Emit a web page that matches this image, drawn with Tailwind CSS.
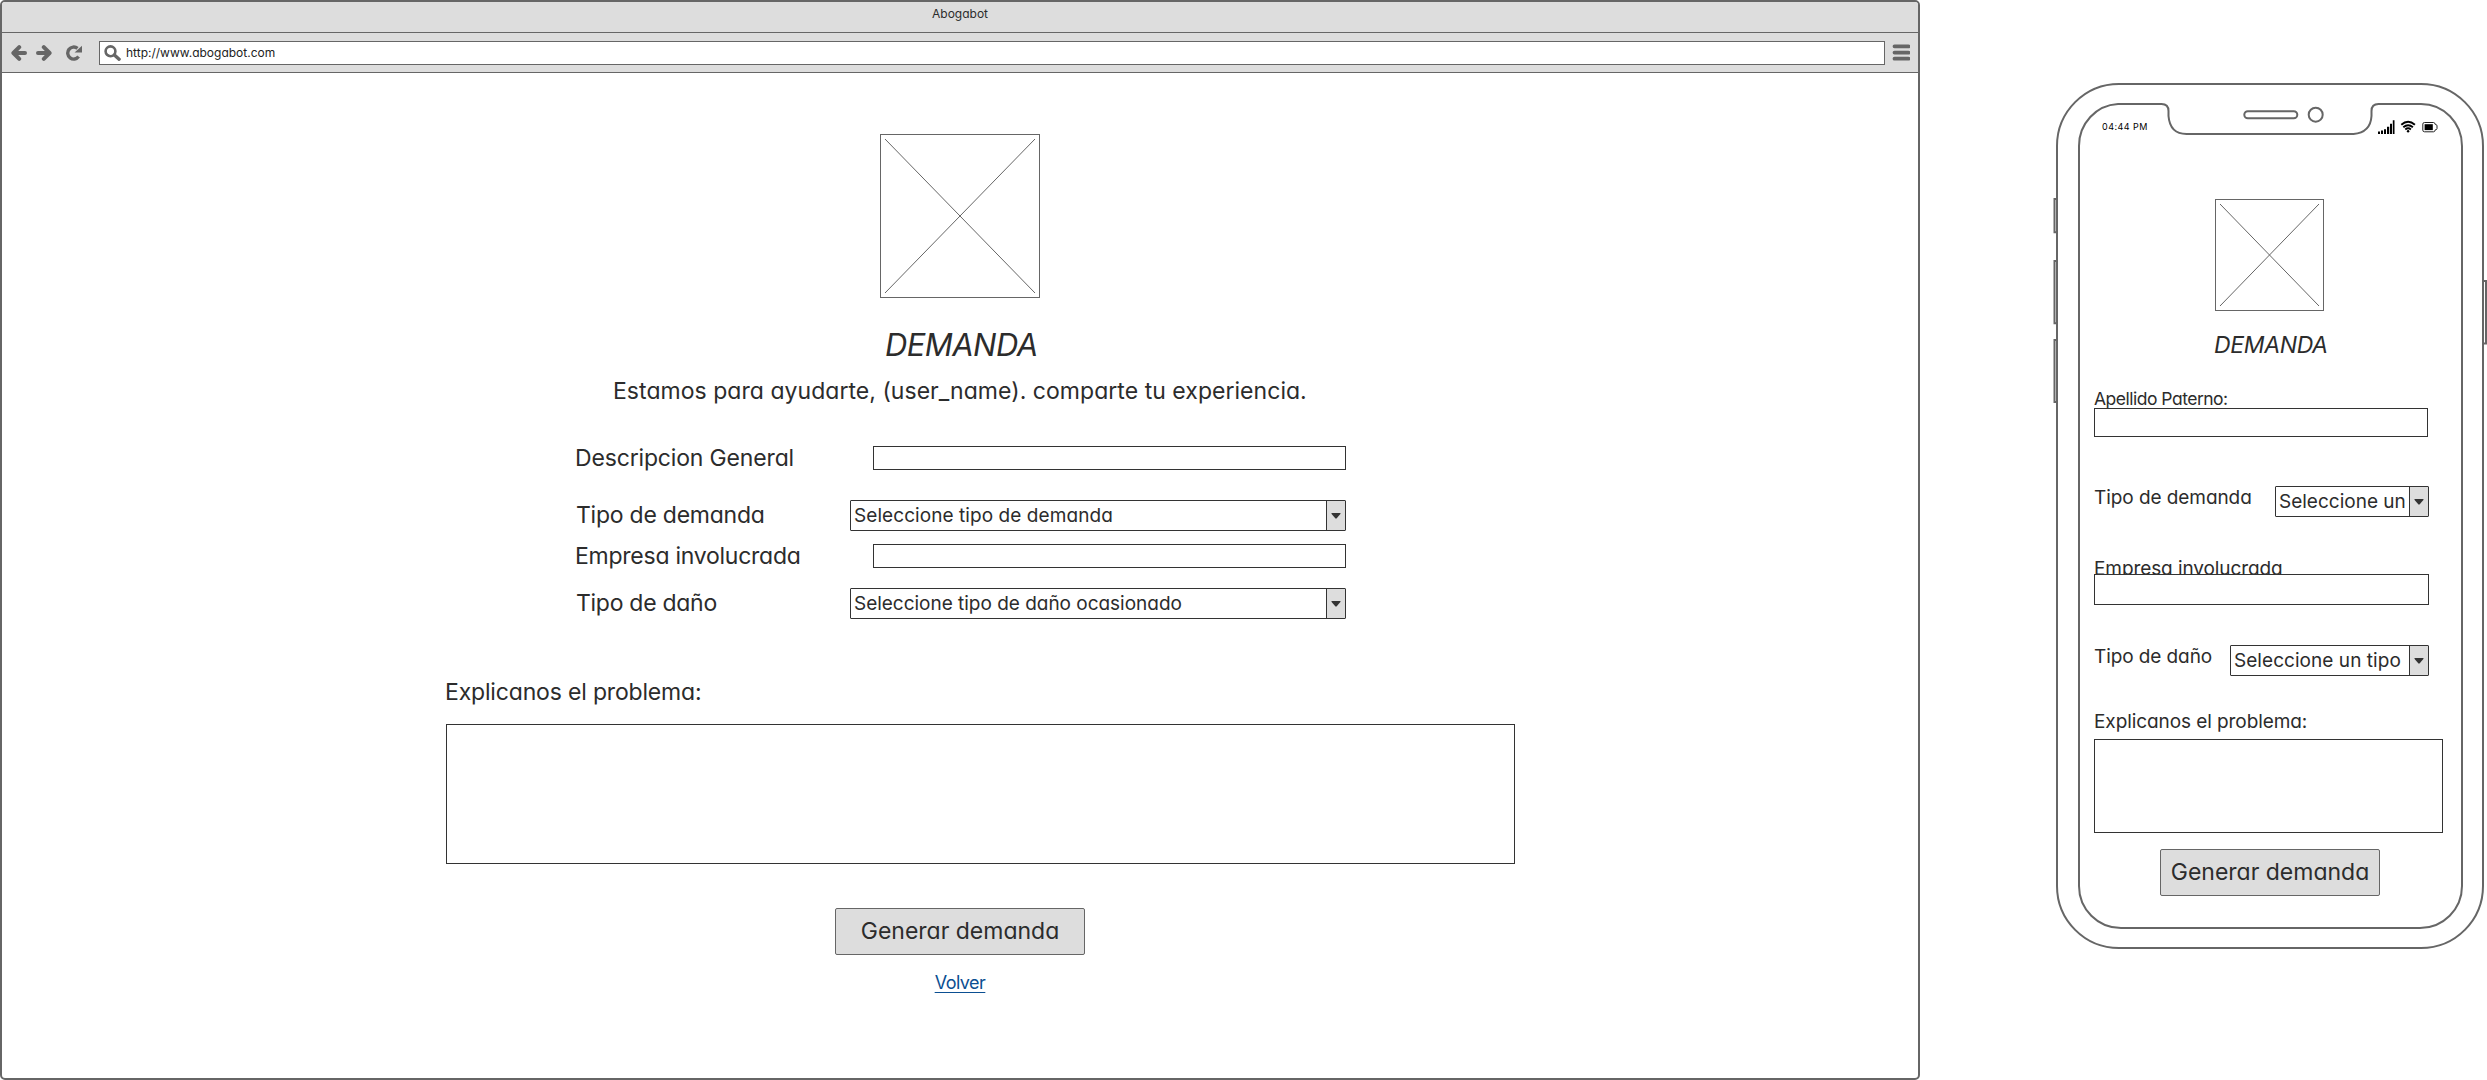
<!DOCTYPE html>
<html lang="es">
<head>
<meta charset="utf-8">
<title>Abogabot</title>
<script src="https://cdn.jsdelivr.net/npm/@tailwindcss/browser@4"></script>
</head>
<body class="flex h-[1080px] w-[2487px] overflow-hidden bg-white font-['Inter',sans-serif] text-[#2c2c2c] [font-feature-settings:'cv11']">

<!-- Desktop browser -->
<section class="flex h-[1080px] w-[1920px] shrink-0 flex-col overflow-hidden rounded-[5px] border-2 border-[#666666]">
  <header class="shrink-0 bg-[#dddddd]">
    <div class="h-[31px] border-b border-[#666666] text-center text-[12px] leading-6">Abogabot</div>
    <div class="flex h-10 items-center border-b border-[#666666] pl-[9px]">
      <svg class="h-4 w-[72px] shrink-0" viewBox="0 0 72 16" fill="none" stroke="#666666">
        <path d="M8.200 2.200 2.400 8l5.800 5.800M3 8h11" stroke-width="4" stroke-linecap="round" stroke-linejoin="round"/>
        <path d="M32.800 2.200 38.600 8l-5.800 5.800M38 8H27" stroke-width="4" stroke-linecap="round" stroke-linejoin="round"/>
        <path d="M67.600 11.600A6 6 0 1 1 66.500 3.400" stroke-width="3.400"/>
        <path d="M71 .8V7.400H63.600Z" fill="#666666" stroke="none"/>
      </svg>
      <div class="ml-4 flex h-6 w-[1786px] items-center border border-[#666666] bg-white pl-1">
        <svg class="h-4 w-[17px] shrink-0" viewBox="0 0 17 16" fill="none" stroke="#666666">
          <circle cx="6.500" cy="6.300" r="4.900" stroke-width="2.600"/>
          <path d="m10.400 10 4.700 4.200" stroke-width="3.400" stroke-linecap="round"/>
        </svg>
        <span class="ml-[5px] pt-px text-[12px] leading-[22px] text-[#222222]">http://www.abogabot.com</span>
      </div>
      <svg class="ml-[7px] h-[17px] w-[18px] shrink-0" viewBox="0 0 18 17" stroke="#666666" stroke-width="3.800" stroke-linecap="round"><path d="M2.500 2.300h14M2.500 8.600h14M2.500 14.700h14"/></svg>
    </div>
  </header>

  <main class="flex grow flex-col">
    <svg class="mt-[61px] ml-[878px] h-[164px] w-[160px] shrink-0" viewBox="0 0 160 164" fill="none" stroke="#666666">
      <rect x=".5" y=".5" width="159" height="163"/><path d="M5 5 155 159M155 5 5 159"/>
    </svg>
    <h1 class="mt-[26px] ml-[883px] h-10 text-[31px] leading-[42px] tracking-[-0.570px] italic">DEMANDA</h1>
    <p class="mt-3 ml-[611px] h-7 text-[23px] leading-[30px] whitespace-nowrap tracking-[0.040px]">Estamos para ayudarte, (user_name). comparte tu experiencia.</p>

    <form class="ml-[572px] flex w-[772px] flex-col">
      <div class="mt-[39px] flex h-7 items-start justify-between">
        <label class="pl-px text-[23px] leading-[30px] tracking-[-0.160px]">Descripcion General</label>
        <div class="mt-[3px] h-6 w-[473px] border border-[#333333]"></div>
      </div>
      <div class="mt-[29px] flex h-[31px] items-start justify-between">
        <label class="pl-[2px] text-[23px] leading-[30px] tracking-[-0.240px]">Tipo de demanda</label>
        <div class="flex h-[31px] w-[496px] rounded-[1px] border border-[#333333]">
          <span class="grow pl-[3px] text-[19px] leading-[29px] tracking-[0.070px]">Seleccione tipo de demanda</span>
          <span class="flex w-[19px] items-center justify-center border-l border-[#333333] bg-[#dddddd]"><svg class="h-[6px] w-[10px]" viewBox="0 0 10 6" fill="#333333"><path d="M1 0h8q1 0 .4.900L5.700 5.300q-.7.700-1.400 0L.6.900Q0 0 1 0Z"/></svg></span>
        </div>
      </div>
      <div class="mt-[10px] flex h-7 items-start justify-between">
        <label class="pl-px text-[23px] leading-[30px] tracking-[-0.250px]">Empresa involucrada</label>
        <div class="mt-[3px] h-6 w-[473px] border border-[#333333]"></div>
      </div>
      <div class="mt-[19px] flex h-[31px] items-start justify-between">
        <label class="pl-[2px] text-[23px] leading-[30px] tracking-[-0.280px]">Tipo de daño</label>
        <div class="flex h-[31px] w-[496px] rounded-[1px] border border-[#333333]">
          <span class="grow pl-[3px] text-[19px] leading-[29px] tracking-[-0.020px]">Seleccione tipo de daño ocasionado</span>
          <span class="flex w-[19px] items-center justify-center border-l border-[#333333] bg-[#dddddd]"><svg class="h-[6px] w-[10px]" viewBox="0 0 10 6" fill="#333333"><path d="M1 0h8q1 0 .4.900L5.700 5.300q-.7.700-1.400 0L.6.900Q0 0 1 0Z"/></svg></span>
        </div>
      </div>
    </form>

    <label class="mt-[58px] ml-[443px] h-7 text-[23px] leading-[30px] tracking-[-0.170px]">Explicanos el problema:</label>
    <div class="mt-[19px] ml-[444px] h-[140px] w-[1069px] shrink-0 border border-[#333333]"></div>
    <button class="mt-11 ml-[833px] h-[47px] w-[250px] shrink-0 rounded-[2px] border border-[#666666] bg-[#dddddd] text-[23px] leading-[45px]">Generar demanda</button>
    <a class="mt-4 self-center text-[18px] leading-6 tracking-[-0.520px] text-[#0b4f92] underline decoration-1 underline-offset-[3px]">Volver</a>
  </main>
</section>

<!-- Phone -->
<section class="relative mt-[82px] ml-[133px] h-[868px] w-[434px] shrink-0">
  <svg class="absolute inset-0 h-[868px] w-[434px]" viewBox="2053 82 434 868" fill="none" stroke="#666666" stroke-width="2">
    <rect x="2057" y="84" width="426" height="864" rx="62"/>
    <path d="M2118 104h43.500q7 0 7 7v5q1.500 18 18 18h167q17-1.500 18-18v-5q0-7 7-7h42.500a41 42 0 0 1 41 42v740a42 42 0 0 1-42 42h-299a42 42 0 0 1-42-42v-740a41 42 0 0 1 39-42Z"/>
    <rect x="2244.300" y="111.300" width="53" height="7" rx="3.500"/>
    <circle cx="2315.700" cy="114.700" r="7"/>
    <path d="M2056.500 199h-2v33.300h2M2056.500 261h-2v62.300h2M2056.500 340h-2v62h2M2483.500 281h2.500v62.500h-2.500"/>
  </svg>

  <div class="relative flex flex-col pt-[38px] pl-10">
    <div class="flex h-[14px] items-start pl-[9px] text-black">
      <span class="w-[276px] text-[9px] leading-[13px] tracking-[0.480px]">04:44 PM</span>
      <svg class="h-[14px] w-[60px]" viewBox="2378 120 60 14" fill="none">
        <path d="M2378 131.500h2v2.500h-2zM2381 130.500h2v3.500h-2zM2384 129.200h2v4.800h-2zM2387 126.800h2.200v7.200h-2.200zM2390 123.800h2v10.200h-2zM2392.800 120.200h1.700v13.800h-1.700z" fill="#000"/>
        <path d="M2401.300 124.800q6.800-6.200 13.600 0M2403.300 127.300q4.800-4.200 9.600 0M2405.300 129.500q2.800-2.300 5.600 0" stroke="#000" stroke-width="1.900"/>
        <circle cx="2408.100" cy="131.300" r="1.200" fill="#000"/>
        <path d="M2424.500 122.500h9q1.500 0 1.800 2 1.700 0 1.700 1.300v2.800q0 1.200-1.700 1.200-.3 2-1.800 2h-9q-1.700 0-1.700-1.700v-6q0-1.600 1.700-1.600Z" stroke="#222"/>
        <path d="M2424.600 124.200h8.200v5.900h-8.200z" fill="#000"/>
      </svg>
    </div>

    <svg class="mt-[65px] ml-[122px] h-28 w-[109px]" viewBox="0 0 109 112" fill="none" stroke="#666666">
      <rect x=".5" y=".5" width="108" height="111"/><path d="M5 5 104 107M104 5 5 107"/>
    </svg>
    <h2 class="mt-[19px] ml-[121px] h-7 text-[23px] leading-[30px] tracking-[-0.350px] italic">DEMANDA</h2>

    <label class="mt-[30px] ml-[1px] h-5 text-[17.500px] leading-[22px] tracking-[-0.500px]">Apellido Paterno:</label>
    <div class="ml-[1px] h-[29px] w-[334px] border border-[#333333] bg-white"></div>

    <div class="mt-[49px] flex h-[31px] w-[336px] items-start justify-between">
      <label class="-mt-px pl-px text-[19px] leading-[26px] tracking-[-0.070px]">Tipo de demanda</label>
      <div class="flex h-[31px] w-[154px] rounded-[1px] border border-[#333333]">
        <span class="w-[129px] overflow-hidden pl-[3px] text-[19px] leading-[29px] whitespace-nowrap">Seleccione un tipo</span>
        <span class="ml-1 flex w-[19px] shrink-0 items-center justify-center border-l border-[#333333] bg-[#dddddd]"><svg class="h-[6px] w-[10px]" viewBox="0 0 10 6" fill="#333333"><path d="M1 0h8q1 0 .4.900L5.700 5.300q-.7.700-1.400 0L.6.900Q0 0 1 0Z"/></svg></span>
      </div>
    </div>

    <label class="mt-[39px] h-6 pl-px text-[19px] leading-[26px] tracking-[-0.090px]">Empresa involucrada</label>
    <div class="relative -mt-[6px] ml-[1px] h-[31px] w-[335px] border border-[#333333] bg-white"></div>

    <div class="mt-10 flex h-[31px] w-[336px] items-start justify-between">
      <label class="-mt-px pl-px text-[19px] leading-[26px] tracking-[-0.090px]">Tipo de daño</label>
      <div class="flex h-[31px] w-[199px] rounded-[1px] border border-[#333333]">
        <span class="grow overflow-hidden pl-[3px] text-[19px] leading-[29px] whitespace-nowrap tracking-[0.050px]">Seleccione un tipo</span>
        <span class="flex w-[19px] shrink-0 items-center justify-center border-l border-[#333333] bg-[#dddddd]"><svg class="h-[6px] w-[10px]" viewBox="0 0 10 6" fill="#333333"><path d="M1 0h8q1 0 .4.900L5.700 5.300q-.7.700-1.400 0L.6.900Q0 0 1 0Z"/></svg></span>
      </div>
    </div>

    <label class="mt-[33px] h-6 pl-px text-[19px] leading-[26px] tracking-[-0.080px]">Explicanos el problema:</label>
    <div class="mt-[6px] ml-[1px] h-[94px] w-[349px] border border-[#333333]"></div>
    <button class="mt-4 ml-[67px] h-[47px] w-[220px] rounded-[2px] border border-[#666666] bg-[#dddddd] text-[23px] leading-[45px]">Generar demanda</button>
  </div>
</section>
</body>
</html>
